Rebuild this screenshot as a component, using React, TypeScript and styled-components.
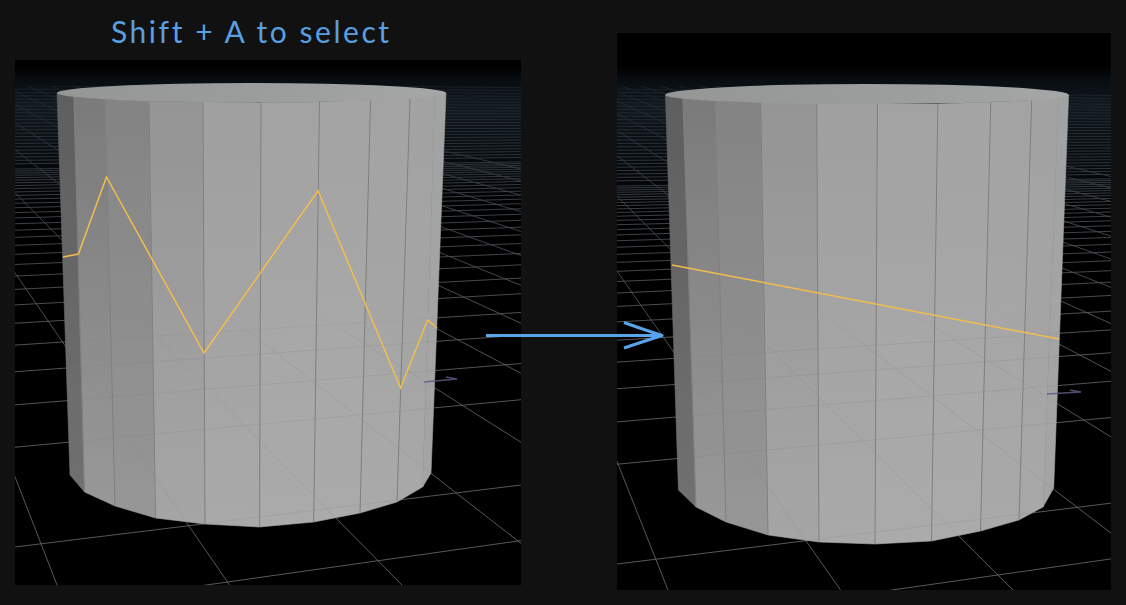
import React from 'react'
import styled, { createGlobalStyle } from 'styled-components'

type Point = [number, number]

interface SceneData {
  id: string
  x: number
  y: number
  width: number
  height: number
  vpRows: Point
  vpCols: Point
  rowStartX: number
  rowOffset: number
  colStart: number
  colBaseY: number
  capLeft: Point
  capRight: Point
  capTopY: number
  capBottomY: number
  top: Point[]
  bottom: Point[]
  selection: Point[]
  axis: [Point, Point, Point]
}

// top to bottom shade of every face of the cylinder, left to right
const faceShades: [string, string][] = [
  ['#5f5f5f', '#717171'],
  ['#7b7b7b', '#999999'],
  ['#848484', '#979797'],
  ['#959595', '#a6a6a6'],
  ['#a0a0a0', '#a9a9a9'],
  ['#a3a3a3', '#ababab'],
  ['#a4a4a4', '#ababab'],
  ['#a3a3a3', '#a9a9a9'],
  ['#a2a2a2', '#a8a8a8'],
  ['#a1a3a2', '#a5a5a5'],
]

const leftScene: SceneData = {
  id: 'left',
  x: 15,
  y: 60,
  width: 506,
  height: 525,
  vpRows: [3500, 120],
  vpCols: [-167, 8],
  rowStartX: 15,
  rowOffset: 0,
  colStart: 57,
  colBaseY: 585,
  capLeft: [57, 93],
  capRight: [446, 93],
  capTopY: 83,
  capBottomY: 102.5,
  top: [[57, 93], [74, 97], [105, 99], [149, 101], [203, 102], [261, 102.5], [319.5, 102], [370.5, 100], [410, 98], [435, 95], [446, 93]],
  bottom: [[70, 475], [84.5, 492], [115, 506], [155.5, 518], [205, 524], [259.6, 527], [313.7, 522], [360, 513], [397, 502], [422.6, 487], [431, 473]],
  selection: [[63, 257], [78.4, 254], [106.5, 177], [204, 353], [318, 190.7], [400.6, 388], [427.6, 320], [437, 328]],
  axis: [[424, 382], [457, 379], [446, 377]],
}

const rightScene: SceneData = {
  id: 'right',
  x: 617,
  y: 33,
  width: 494,
  height: 557,
  vpRows: [4100, 135],
  vpCols: [443, 23],
  rowStartX: 617,
  rowOffset: 17,
  colStart: 668,
  colBaseY: 590,
  capLeft: [665.4, 95],
  capRight: [1068.6, 95],
  capTopY: 84,
  capBottomY: 104,
  top: [[665.4, 95], [683, 98], [715, 100], [760.7, 102], [816.7, 103], [877.4, 104], [937.8, 104], [990.8, 102], [1031.7, 100], [1058.6, 97], [1068.6, 95]],
  bottom: [[678.4, 490], [696, 507], [726, 522], [768, 535], [819, 542], [875, 544], [931.5, 541], [980.5, 531], [1019, 520], [1043, 507], [1053.7, 488]],
  selection: [[672, 265], [1059, 339]],
  axis: [[1047, 394], [1081, 392], [1070, 390]],
}

const GlobalStyle = createGlobalStyle`
  html, body {
    margin: 0;
    background: #111111;
    overflow: hidden;
  }
`

const Page = styled.main`
  position: relative;
  display: flex;
  gap: 96px;
  width: 1126px;
  height: 605px;
  padding-left: 15px;
  box-sizing: border-box;
  background: #111111;
`

const LeftColumn = styled.section`
  display: flex;
  flex-direction: column;
  width: 506px;
`

const RightColumn = styled.section`
  width: 494px;
  padding-top: 33px;
`

const Heading = styled.h2`
  height: 60px;
  margin: 0;
  padding: 0 0 0 96px;
  box-sizing: border-box;
  font-family: 'Lato', 'Noto Sans', sans-serif;
  font-size: 30px;
  font-weight: 400;
  line-height: 62px;
  letter-spacing: 2.55px;
  color: #5a9fe0;
  white-space: nowrap;
`

const PanelSvg = styled.svg<{ $w: number; $h: number }>`
  display: block;
  width: ${({ $w }) => $w}px;
  height: ${({ $h }) => $h}px;
  background: #000000;
`

const ArrowOverlay = styled.svg`
  position: absolute;
  left: 480px;
  top: 315px;
  width: 190px;
  height: 40px;
`

const pts = (list: Point[]) => list.map(p => p.join(',')).join(' ')

// left edge heights of the floor rows, they get tighter going back to the horizon
const rowIntercepts = () => {
  const rows = [612, 547]
  for (let i = 0; i < 30; i++) rows.push(100 + 1 / (0.00288 + 0.0004 * i))
  for (let y = 72; y < 165; y += 3.4) rows.push(y)
  return rows
}

const lineThroughVp = (vp: Point, x: number, y: number, toX: number) => {
  const slope = (vp[1] - y) / (vp[0] - x)
  return { x1: x, y1: y, x2: toX, y2: y + slope * (toX - x) }
}

const FloorGrid = ({ scene, onlyNear, stroke }: { scene: SceneData; onlyNear?: boolean; stroke: string }) => {
  const right = scene.x + scene.width
  const rows = rowIntercepts().filter(y => !onlyNear || y > 330)
  const cols = Array.from({ length: 14 }, (_, i) => scene.colStart + 172.5 * i)
  return (
    <g stroke={stroke} strokeWidth={0.85} fill="none">
      {rows.map((y, i) => {
        const line = lineThroughVp(scene.vpRows, scene.rowStartX, y + scene.rowOffset, right)
        return <line key={`r${i}`} {...line} />
      })}
      {cols.map((x, i) => {
        const line = lineThroughVp(scene.vpCols, x, scene.colBaseY, scene.vpCols[0])
        return <line key={`c${i}`} {...line} />
      })}
    </g>
  )
}

const Scene = ({ scene }: { scene: SceneData }) => {
  const { id, top, bottom, capLeft, capRight, capTopY, capBottomY } = scene
  const outline: Point[] = [...top, ...[...bottom].reverse()]
  const rx = (capRight[0] - capLeft[0]) / 2
  const capPath = `M${capLeft[0]} ${capLeft[1]} A${rx} ${capLeft[1] - capTopY} 0 0 1 ${capRight[0]} ${capRight[1]} A${rx} ${capBottomY - capRight[1]} 0 0 1 ${capLeft[0]} ${capLeft[1]}Z`
  const floorTop = 86
  return (
    <PanelSvg
      $w={scene.width}
      $h={scene.height}
      viewBox={`${scene.x} ${scene.y} ${scene.width} ${scene.height}`}
    >
      <defs>
        <linearGradient id={`${id}-haze`} gradientUnits="userSpaceOnUse" x1="0" y1="66" x2="0" y2="210">
          <stop offset="0" stopColor="#000000" />
          <stop offset="0.1" stopColor="#080d11" />
          <stop offset="0.28" stopColor="#11181e" />
          <stop offset="0.5" stopColor="#0a0f13" />
          <stop offset="1" stopColor="#000000" />
        </linearGradient>
        <linearGradient id={`${id}-grid`} gradientUnits="userSpaceOnUse" x1="0" y1={floorTop} x2="0" y2="590">
          <stop offset="0" stopColor="#1a232a" />
          <stop offset="0.1" stopColor="#2b343c" />
          <stop offset="0.25" stopColor="#434a51" />
          <stop offset="0.5" stopColor="#5d6064" />
          <stop offset="1" stopColor="#686868" />
        </linearGradient>
        <linearGradient id={`${id}-through`} gradientUnits="userSpaceOnUse" x1="0" y1="300" x2="0" y2="345">
          <stop offset="0" stopColor="#77777f" stopOpacity="0" />
          <stop offset="1" stopColor="#77777f" stopOpacity="1" />
        </linearGradient>
        <linearGradient id={`${id}-cap`} x1="0" y1="0" x2="1" y2="0">
          <stop offset="0" stopColor="#959796" />
          <stop offset="0.6" stopColor="#9c9e9d" />
          <stop offset="1" stopColor="#a6a8a7" />
        </linearGradient>
        {faceShades.map(([from, to], i) => (
          <linearGradient key={i} id={`${id}-face${i}`} x1="0" y1="0" x2="0" y2="1">
            <stop offset="0" stopColor={from} />
            <stop offset="1" stopColor={to} />
          </linearGradient>
        ))}
        <clipPath id={`${id}-body`}>
          <polygon points={pts(outline)} />
        </clipPath>
        <clipPath id={`${id}-floor`}>
          <rect x={scene.x} y={floorTop} width={scene.width} height={scene.height} />
        </clipPath>
      </defs>

      <rect x={scene.x} y={scene.y} width={scene.width} height={scene.height} fill={`url(#${id}-haze)`} />
      <g clipPath={`url(#${id}-floor)`}>
        <FloorGrid scene={scene} stroke={`url(#${id}-grid)`} />
      </g>

      {faceShades.map((_, i) => (
        <polygon
          key={i}
          points={pts([top[i], top[i + 1], bottom[i + 1], bottom[i]])}
          fill={`url(#${id}-face${i})`}
          stroke={`url(#${id}-face${i})`}
          strokeWidth={0.6}
        />
      ))}
      <g clipPath={`url(#${id}-body)`} opacity={0.22}>
        <FloorGrid scene={scene} onlyNear stroke={`url(#${id}-through)`} />
      </g>
      {top.slice(1, -2).map((p, i) => (
        <line key={i} x1={p[0]} y1={p[1]} x2={bottom[i + 1][0]} y2={bottom[i + 1][1]} stroke="#808080" strokeWidth={1} />
      ))}
      <path d={capPath} fill={`url(#${id}-cap)`} />
      <polyline points={pts(scene.axis)} stroke="#5b597f" strokeWidth={1.5} fill="none" opacity={0.85} />
      <polyline points={pts(scene.selection)} stroke="#f2bd4e" strokeWidth={1.5} fill="none" />
    </PanelSvg>
  )
}

export default function App() {
  return (
    <Page>
      <GlobalStyle />
      <LeftColumn>
        <Heading>Shift + A to select</Heading>
        <Scene scene={leftScene} />
      </LeftColumn>
      <RightColumn>
        <Scene scene={rightScene} />
      </RightColumn>
      <ArrowOverlay viewBox="480 315 190 40">
        <path
          d="M486 335.5H660M624 322.5Q645 330 662 335.5Q645 341 624 348"
          stroke="#58a4ea"
          strokeWidth={3}
          strokeLinejoin="round"
          fill="none"
        />
      </ArrowOverlay>
    </Page>
  )
}
